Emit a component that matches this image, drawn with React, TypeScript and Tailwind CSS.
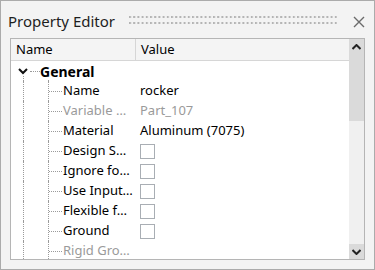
import React from "react";

const F = { fontFamily: '"Noto Sans", "Open Sans", sans-serif' };

type Row = { name: string; value?: string; check?: boolean; gray?: boolean };

const rows: Row[] = [
  { name: "Name", value: "rocker" },
  { name: "Variable …", value: "Part_107", gray: true },
  { name: "Material", value: "Aluminum (7075)" },
  { name: "Design S…", check: true },
  { name: "Ignore fo…", check: true },
  { name: "Use Input…", check: true },
  { name: "Flexible f…", check: true },
  { name: "Ground", check: true },
  { name: "Rigid Gro…", gray: true },
];

function Grip() {
  return (
    <svg width="208" height="10" className="block">
      <defs>
        <pattern id="g" width="4.2" height="6" patternUnits="userSpaceOnUse">
          <rect x="0" y="0" width="2" height="2" fill="#b4b4b4" />
        </pattern>
      </defs>
      <rect x="0" y="0" width="208" height="10" fill="url(#g)" />
    </svg>
  );
}

export default function App() {
  return (
    <div
      className="w-[375px] h-[270px] border border-[#ababab] bg-[#f3f3f3] flex flex-col text-[13px] text-black"
      style={F}
    >
      <div className="h-[37px] flex items-center pl-[7px] pr-[9px] shrink-0">
        <span className="text-[15px] text-[#1e1e1e] leading-none w-[121px] mt-[4px]">Property Editor</span>
        <div className="mt-[3px]">
          <Grip />
        </div>
        <svg width="12" height="12" viewBox="0 0 12 12" className="ml-auto mt-[4px]">
          <path d="M1 1 L11 11 M11 1 L1 11" stroke="#6b6b6b" strokeWidth="1.4" />
        </svg>
      </div>
      <div className="ml-[9px] mr-[9px] h-[222px] border border-[#b5b5b5] flex bg-white">
        <div className="flex-1 flex flex-col overflow-hidden">
          <div className="h-[22px] shrink-0 flex bg-[#f4f4f4] border-b border-[#d6d6d6]">
            <div className="w-[125px] border-r border-[#d6d6d6] pl-[5px] flex items-center">Name</div>
            <div className="pl-[5px] flex items-center">Value</div>
          </div>
          <div className="flex flex-col">
            <div className="h-[20px] flex items-center relative">
              <svg width="10" height="7" viewBox="0 0 10 7" className="ml-[7px] mr-[2px]">
                <path d="M1 1 L5 5 L9 1" stroke="#111" strokeWidth="2" fill="none" />
              </svg>
              <div className="w-[10px] border-t border-dotted border-[#9a9a9a]" />
              <span className="text-[14px] font-bold">General</span>
              <div className="absolute left-[12px] top-[15px] h-[5px] border-l border-dotted border-[#9a9a9a]" />
              <div className="absolute left-[37px] top-[19px] h-[1px] border-l border-dotted border-[#9a9a9a]" />
            </div>
            {rows.map((r, i) => (
              <div key={i} className="h-[20px] flex items-center">
                <div className="w-[12px] shrink-0" />
                <div className="h-[20px] w-[25px] shrink-0 border-l border-dotted border-[#9a9a9a]" />
                <div className="h-[20px] w-[15px] shrink-0 border-l border-dotted border-[#9a9a9a] flex items-center">
                  <div className="w-[13px] border-t border-dotted border-[#9a9a9a]" />
                </div>
                <div className={`w-[75px] shrink-0 whitespace-nowrap ${r.gray ? "text-[#9a9a9a]" : ""}`}>{r.name}</div>
                <div className="pl-[2px] whitespace-nowrap">
                  {r.check ? (
                    <div className="w-[15px] h-[15px] border border-[#a9aeb4] bg-white" />
                  ) : (
                    <span className={r.gray ? "text-[#9a9a9a]" : ""}>{r.value}</span>
                  )}
                </div>
              </div>
            ))}
          </div>
        </div>
        <div className="w-[15px] shrink-0 bg-[#f0f0f0] flex flex-col">
          <div className="h-[82px] bg-[#dadada] flex justify-center pt-[5px]">
            <svg width="9" height="6" viewBox="0 0 9 6">
              <path d="M0.5 5 L4.5 1 L8.5 5" stroke="#222" strokeWidth="2" fill="none" />
            </svg>
          </div>
          <div className="flex-1" />
          <div className="h-[15px] bg-[#dadada] flex justify-center items-center">
            <svg width="9" height="6" viewBox="0 0 9 6">
              <path d="M0.5 1 L4.5 5 L8.5 1" stroke="#222" strokeWidth="2" fill="none" />
            </svg>
          </div>
        </div>
      </div>
    </div>
  );
}
